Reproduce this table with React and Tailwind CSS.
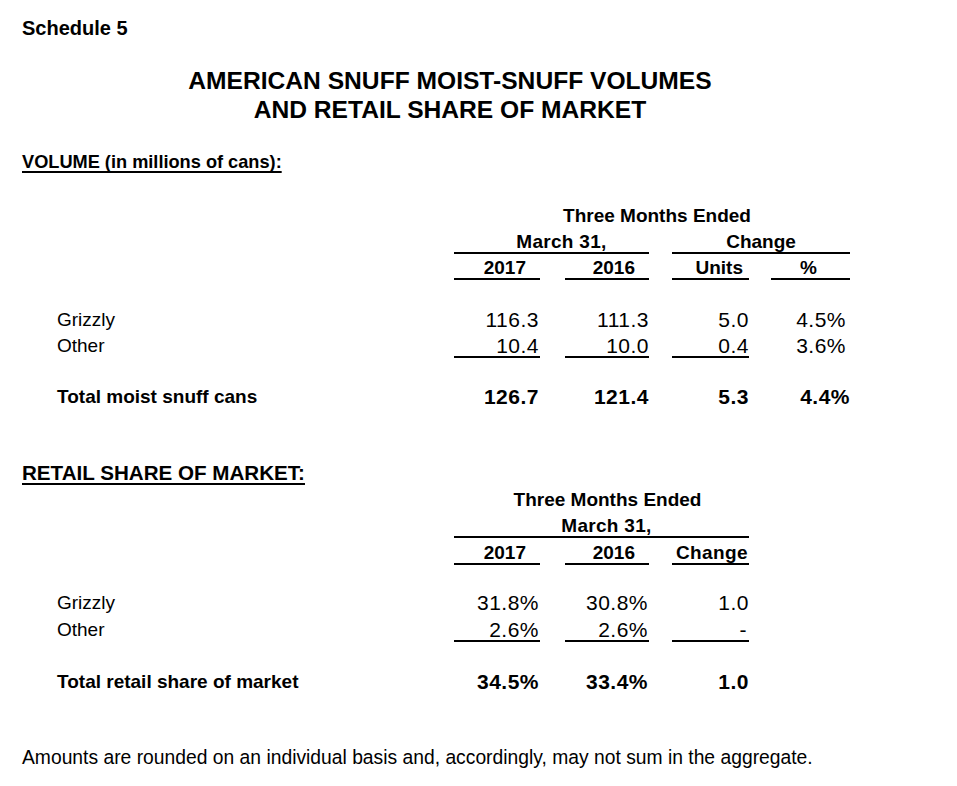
const FONT = { fontFamily: '"Liberation Sans", Arial, sans-serif' };

// column boxes, x positions from the page: 454-540, 565-649, 672-749, 771-850
const COLS = ["w-[86px]", "ml-[25px] w-[84px]", "ml-[23px] w-[77px]", "ml-[22px] w-[79px]"];

const Row = ({ label, bold, cells = [], lines = [], pads = [], num, mt }) => (
  <div className={`flex h-[22px] ${mt}`}>
    <div className={`w-[454px] pl-[57px] text-[19px] leading-[20px] ${bold ? "font-bold" : ""}`}>{label}</div>
    {cells.map((c, i) => (
      <div
        key={i}
        className={`${COLS[i]} h-[22px] border-b-2 text-right leading-[20px] whitespace-nowrap ${
          lines[i] ? "border-black" : "border-transparent"
        } ${num ? "text-[21px] tracking-[0.5px]" : "text-[19px]"} ${bold ? "font-bold" : ""} ${pads[i] || ""}`}
      >
        {c}
      </div>
    ))}
  </div>
);

const Volume = () => (
  <div>
    <div className="flex h-[22px] mt-[34px]">
      <div className="w-[454px]" />
      <div className="w-[396px] text-center text-[19px] font-bold leading-[20px] pl-[10px]">Three Months Ended</div>
    </div>
    <div className="flex h-[22px] mt-[4px] text-[19px] font-bold leading-[20px]">
      <div className="w-[454px]" />
      <div className="w-[195px] h-[22px] border-b-2 border-black text-center pl-[20px] tracking-[0.3px]">March 31,</div>
      <div className="ml-[23px] w-[178px] h-[22px] border-b-2 border-black text-center">Change</div>
    </div>
    <Row
      mt="mt-[4px]"
      bold
      cells={["2017", "2016", "Units", "%"]}
      lines={[1, 1, 1, 1]}
      pads={["pr-[14px]", "pr-[14px]", "pr-[6px]", "pr-[33px]"]}
    />
    <Row
      mt="mt-[30px]"
      label="Grizzly"
      num
      cells={["116.3", "111.3", "5.0", "4.5%"]}
      pads={["pr-[1px]", "", "", "pr-[4px]"]}
    />
    <Row
      mt="mt-[4px]"
      label="Other"
      num
      cells={["10.4", "10.0", "0.4", "3.6%"]}
      lines={[1, 1, 1, 0]}
      pads={["pr-[1px]", "", "", "pr-[4px]"]}
    />
    <Row
      mt="mt-[29px]"
      label="Total moist snuff cans"
      bold
      num
      cells={["126.7", "121.4", "5.3", "4.4%"]}
      pads={["pr-[1px]", "", "", ""]}
    />
  </div>
);

const Share = () => (
  <div>
    <div className="flex h-[22px] mt-[7px]">
      <div className="w-[454px]" />
      <div className="w-[295px] text-center text-[19px] font-bold leading-[20px] pl-[12px]">Three Months Ended</div>
    </div>
    <div className="flex h-[22px] mt-[4px] text-[19px] font-bold leading-[20px]">
      <div className="w-[454px]" />
      <div className="w-[295px] h-[22px] border-b-2 border-black text-center pl-[10px] tracking-[0.3px]">March 31,</div>
    </div>
    <Row
      mt="mt-[5px]"
      bold
      cells={[
        "2017",
        "2016",
        <span key="c" className="tracking-[0.4px]">Change</span>,
      ]}
      lines={[1, 1, 1]}
      pads={["pr-[14px]", "pr-[14px]", "pr-[1px]"]}
    />
    <Row
      mt="mt-[28px]"
      label="Grizzly"
      num
      cells={["31.8%", "30.8%", "1.0"]}
      pads={["pr-[1px]", "pr-[1px]", ""]}
    />
    <Row
      mt="mt-[5px]"
      label="Other"
      num
      cells={["2.6%", "2.6%", "-"]}
      lines={[1, 1, 1]}
      pads={["pr-[1px]", "pr-[1px]", "pr-[2px]"]}
    />
    <Row
      mt="mt-[30px]"
      label="Total retail share of market"
      bold
      num
      cells={["34.5%", "33.4%", "1.0"]}
      pads={["pr-[1px]", "pr-[1px]", ""]}
    />
  </div>
);

export default function App() {
  return (
    <div className="w-[957px] h-[786px] bg-white text-black overflow-hidden" style={FONT}>
      <div className="w-[900px]">
        <div className="mt-[15px] pl-[22px] h-[26px] text-[20px] font-bold leading-[26px]">Schedule 5</div>

        <div className="mt-[25px] text-center text-[24.6px] font-bold leading-[29px]">
          <div>AMERICAN SNUFF MOIST-SNUFF VOLUMES</div>
          <div>AND RETAIL SHARE OF MARKET</div>
        </div>

        <div className="mt-[28px] pl-[22px] h-[20px] text-[18.2px] font-bold leading-[20px] underline decoration-2 underline-offset-[3px] [text-decoration-skip-ink:none]">
          VOLUME (in millions of cans):
        </div>

        <Volume />

        <div className="mt-[54px] pl-[22px] h-[20px] text-[20.6px] font-bold leading-[20px] underline decoration-2 underline-offset-[3px] [text-decoration-skip-ink:none]">
          RETAIL SHARE OF MARKET:
        </div>

        <Share />

        <div className="mt-[54px] pl-[22px] h-[20px] text-[19.3px] leading-[20px] whitespace-nowrap">
          Amounts are rounded on an individual basis and, accordingly, may not sum in the aggregate.
        </div>
      </div>
    </div>
  );
}
